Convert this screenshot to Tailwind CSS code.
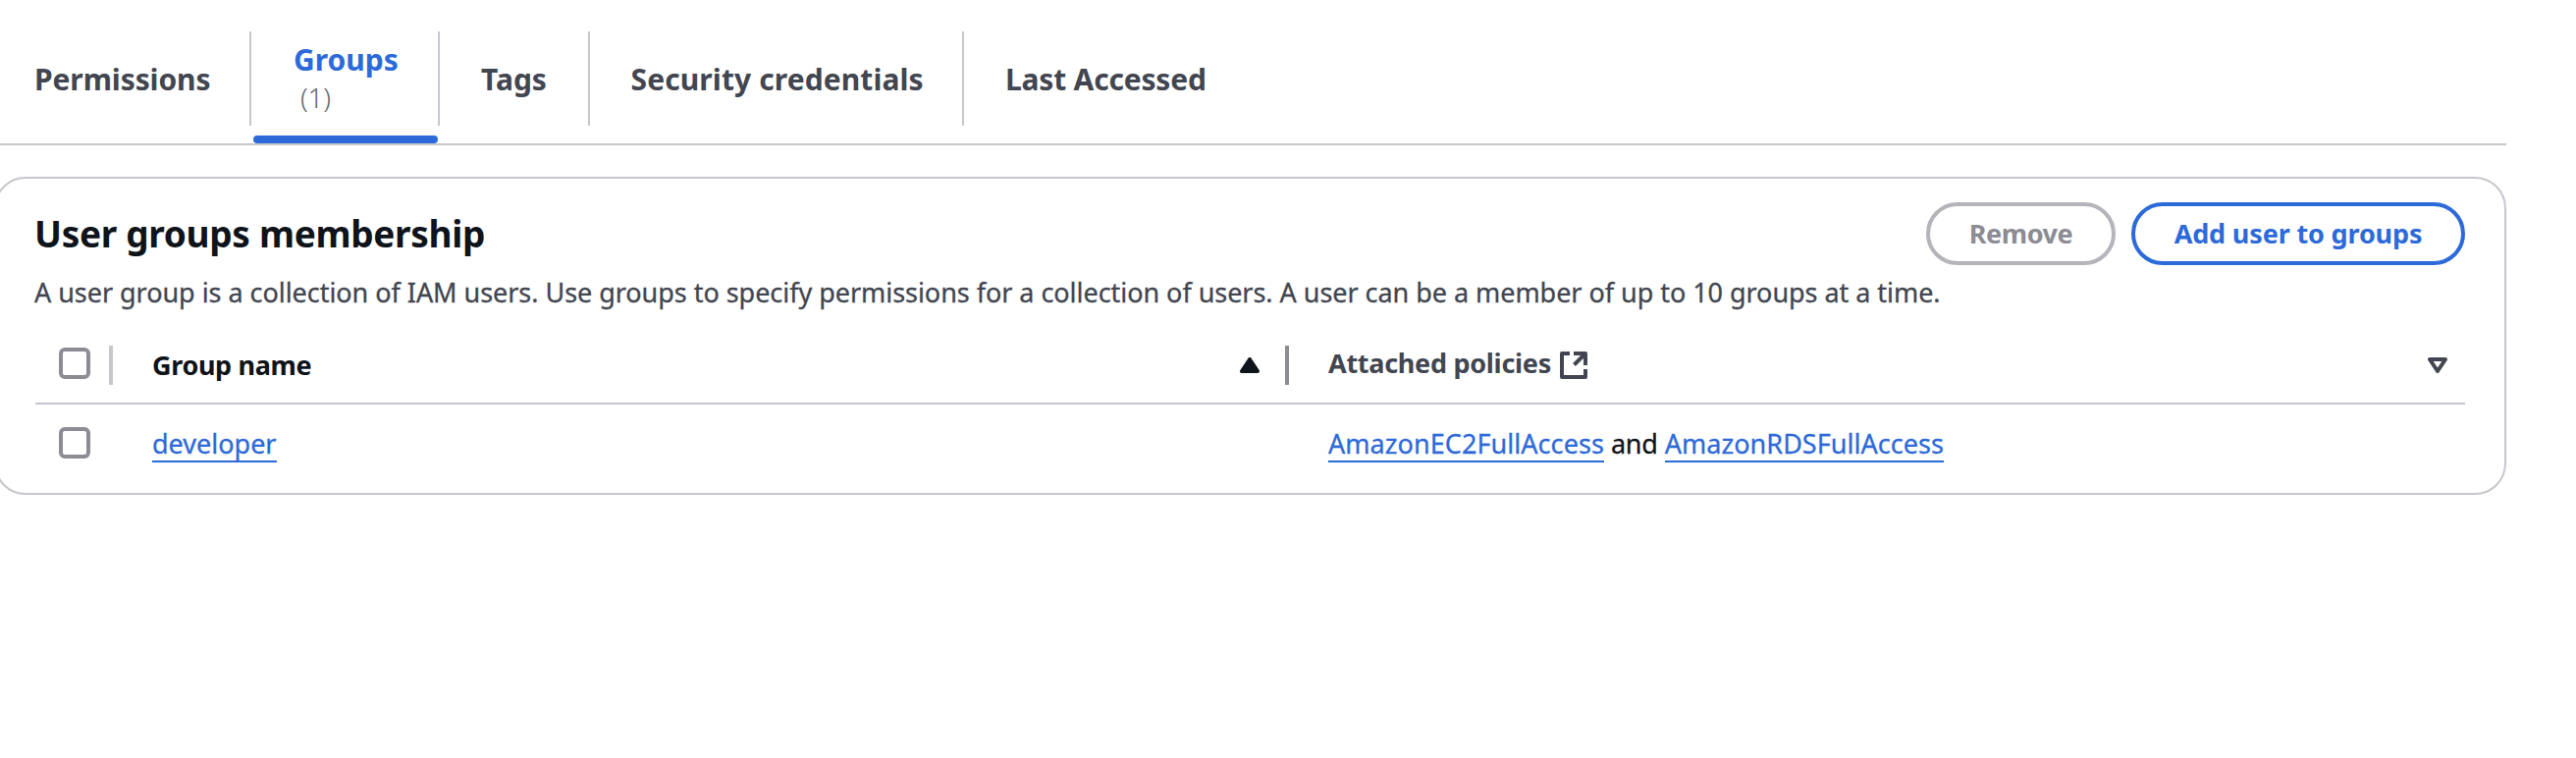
<!DOCTYPE html>
<html lang="en">
<head>
<meta charset="utf-8">
<title>User groups membership</title>
<script src="https://cdn.jsdelivr.net/npm/@tailwindcss/browser@4"></script>
</head>
<body class="h-[772px] overflow-hidden bg-white font-['Noto_Sans',sans-serif] text-[27px] text-[#424650]">
<div class="w-[2553px] pt-8">

  <!-- Tabs -->
  <nav class="flex h-[116px] border-b-2 border-[#c6c6cd] text-[30px] leading-10 font-bold whitespace-nowrap">
    <a class="flex h-24 w-64 items-center border-r-2 border-[#c6c6cd] pt-0.5 pl-[35px] tracking-[-0.1px]">Permissions</a>
    <a class="relative flex h-24 w-48 flex-col justify-center border-r-2 border-[#c6c6cd] pb-px pl-[43px] text-[#2d6ad9]">
      <span class="leading-[38px]">Groups</span>
      <span class="pl-[7px] text-[28px] leading-[38px] font-light tracking-[-0.3px] text-[#656871]">(1)</span>
      <span class="absolute top-[106px] left-0.5 h-2 w-47 rounded-[4px] bg-[#2d6ad9]"></span>
    </a>
    <a class="flex h-24 w-[153px] items-center border-r-2 border-[#c6c6cd] pt-0.5 pl-[42px]">Tags</a>
    <a class="flex h-24 w-[381px] items-center border-r-2 border-[#c6c6cd] pt-0.5 pl-[41.5px] tracking-[0.1px]">Security credentials</a>
    <a class="flex h-24 items-center pt-0.5 pl-[42px] tracking-[-0.2px]">Last Accessed</a>
  </nav>

  <!-- Card -->
  <section class="mt-8 -ml-1.5 h-[324px] rounded-[32px] border-2 border-[#c6c6cd] px-10 pt-6">
    <div class="flex h-16 items-center justify-between whitespace-nowrap">
      <h2 class="-ml-px text-[37px] leading-[52px] font-bold tracking-[-0.32px] text-[#0f141a]">User groups membership</h2>
      <div class="flex gap-4 font-bold">
        <button class="flex h-16 w-[193px] items-center justify-center rounded-full border-4 border-[#b4b4bb] leading-[38px] tracking-[-0.4px] text-[#8c8c94]">Remove</button>
        <button class="flex h-16 w-[340px] items-center justify-center rounded-full border-4 border-[#2d6ad9] leading-[38px] tracking-[-0.15px] text-[#2d6ad9]">Add user to groups</button>
      </div>
    </div>
    <p class="mt-2 -ml-px leading-10 tracking-[-0.04px] whitespace-nowrap [-webkit-text-stroke:0.3px]">A user group is a collection of IAM users. Use groups to specify permissions for a collection of users. A user can be a member of up to 10 groups at a time.</p>

    <!-- Table header -->
    <div class="flex h-[94px] items-start border-b-2 border-[#c6c6cd] leading-[37px] font-bold whitespace-nowrap">
      <div class="flex w-[79px] items-start justify-between pl-6">
        <span class="mt-9 size-8 rounded-[6px] border-4 border-[#8c8c94]"></span>
        <span class="mt-[34px] h-10 w-1 bg-[#c6c6cd]"></span>
      </div>
      <div class="flex w-[1198px] items-start pl-10 text-[#0f141a]">
        <span class="mt-[35px] tracking-[-0.35px]">Group name</span>
        <svg class="mt-[46px] ml-auto h-4 w-5" viewBox="0 0 20 16" fill="currentColor" stroke="currentColor" stroke-width="4" stroke-linejoin="round"><path d="M10 2 2 14h16z"/></svg>
        <span class="mt-[34px] ml-[26px] h-10 w-1 bg-[#8c8c94]"></span>
      </div>
      <div class="flex flex-1 items-start pr-[18px] pl-10">
        <span class="mt-[33px] w-[236px] tracking-[-0.28px]">Attached policies</span>
        <svg class="mt-10 size-7" viewBox="0 0 28 28" fill="none" stroke="currentColor" stroke-width="4" stroke-linejoin="round"><path d="M10 2H2v24h24v-8M14 2h12v12M26 2 14.5 13.5"/></svg>
        <svg class="mt-[46px] ml-auto h-4 w-5" viewBox="0 0 20 16" fill="none" stroke="currentColor" stroke-width="4" stroke-linejoin="round"><path d="M2 2h16l-8 12z"/></svg>
      </div>
    </div>

    <!-- Table row -->
    <div class="flex items-start leading-[35px] whitespace-nowrap [-webkit-text-stroke:0.3px]">
      <div class="w-[79px] pl-6"><span class="mt-[23px] block size-8 rounded-[6px] border-4 border-[#8c8c94]"></span></div>
      <div class="w-[1198px] pt-[22px] pl-10"><a class="inline-block border-b-2 border-[#2d6ad9] text-[#2d6ad9]">developer</a></div>
      <div class="flex flex-1 pt-[22px] pl-10 text-[#0f141a]">
        <a class="border-b-2 border-[#2d6ad9] tracking-[0.06px] text-[#2d6ad9]">AmazonEC2FullAccess</a>
        <span class="px-[7px] tracking-[-0.2px]">and</span>
        <a class="border-b-2 border-[#2d6ad9] tracking-[0.03px] text-[#2d6ad9]">AmazonRDSFullAccess</a>
      </div>
    </div>
  </section>
</div>
</body>
</html>
